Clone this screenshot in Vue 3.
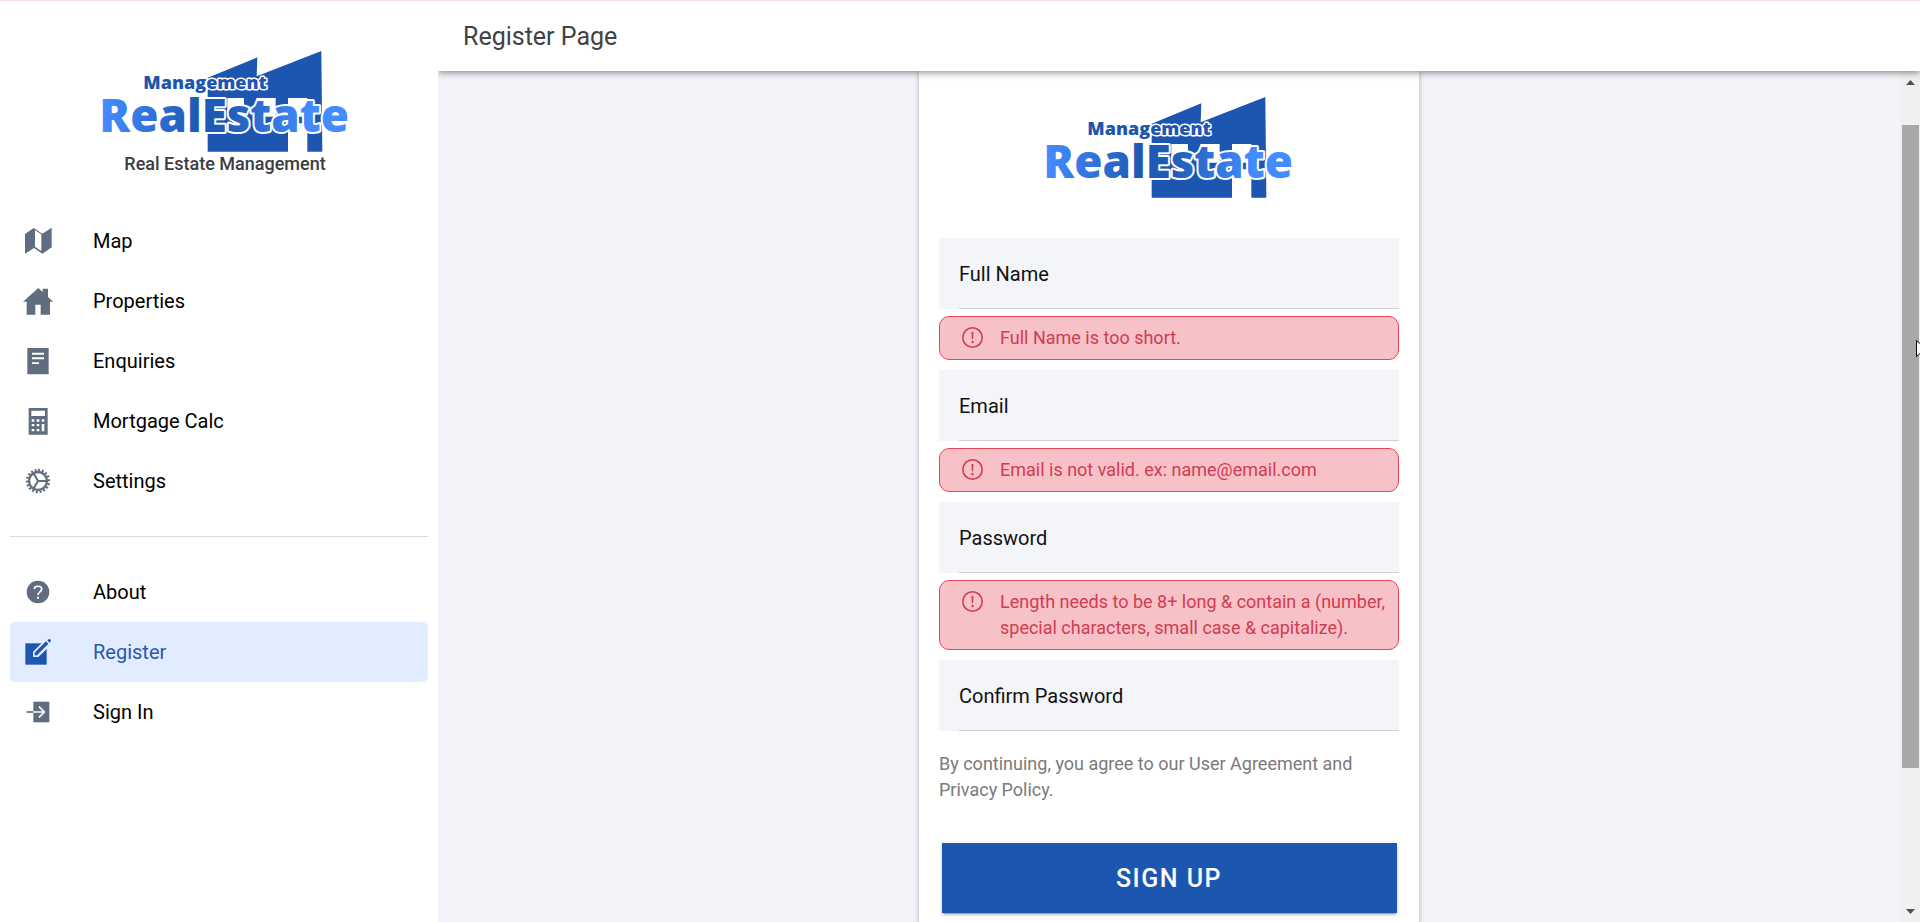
<script setup>
import { reactive, h } from 'vue'

const mainLinks = [
  { label: 'Map', icon: 'map' },
  { label: 'Properties', icon: 'home' },
  { label: 'Enquiries', icon: 'reader' },
  { label: 'Mortgage Calc', icon: 'calculator' },
  { label: 'Settings', icon: 'cog' },
]
const userLinks = [
  { label: 'About', icon: 'help' },
  { label: 'Register', icon: 'create', active: true },
  { label: 'Sign In', icon: 'enter' },
]
const groups = [mainLinks, userLinks]

const icons = {
  map: [{ d: 'M6 24L32 6L58 23L86 5V64L58 83L33 66L6 83ZM36 13V62L55 75V25Z' }],
  home: [{ d: 'M46 6L59 18V8H75V33L90 47H81V86H53V56H37V86H11V47H0Z' }],
  reader: [{ d: 'M13 6H77V85H13ZM27 20V26H63V20ZM27 34V40H63V34ZM27 49V54H48V49Z' }],
  calculator: [
    {
      d: 'M17 6H74V86H17ZM25 14V30H66V14ZM26 40V47H34V40ZM41 40V47H49V40ZM56 40V47H64V40ZM26 54V61H34V54ZM41 54V61H49V54ZM26 69V76H34V69ZM41 69V76H49V69ZM56 54V76H64V54Z',
    },
  ],
  cog: [
    { d: 'M45 18A27 27 0 1 1 45 72A27 27 0 1 1 45 18', line: 7 },
    { d: 'M45 12A33 33 0 1 1 45 78A33 33 0 1 1 45 12', line: 7, dash: '6 5.52' },
    { d: 'M45 45H72M45 45L31 21M45 45L31 69', line: 6 },
  ],
  help: [
    { d: 'M45 11A34 34 0 1 1 45 79A34 34 0 1 1 45 11Z' },
    { d: 'M34 36C35 25 56 25 56 37C56 45 45 44 45 54', line: 5, light: true },
    { d: 'M42 59H48V65H42Z', light: true },
  ],
  create: [
    { d: 'M7 19H71V83H7Z' },
    { d: 'M30 60V44L66 8L84 24L46 60Z', light: true },
    { d: 'M35 55V47L69 13L76 20L42 55Z' },
    { d: 'M73 10L77 7Q80 5 83 8Q85 11 83 13L79 17Z' },
  ],
  enter: [
    { d: 'M31 14H79V76H31Z' },
    { d: 'M11 45H31', line: 5 },
    { d: 'M31 45H64M48 29L64 45L48 61', line: 5, light: true },
  ],
}

const Glyph = (props) =>
  h(
    'svg',
    { viewBox: '0 0 90 90', width: 30, height: 30, 'aria-hidden': 'true' },
    icons[props.name].map((p) => {
      const paint = p.light ? props.ground : 'currentColor'
      return h('path', {
        d: p.d,
        fill: p.line ? 'none' : paint,
        'fill-rule': 'evenodd',
        stroke: p.line ? paint : 'none',
        'stroke-width': p.line,
        'stroke-dasharray': p.dash,
      })
    }),
  )
Glyph.props = ['name', 'ground']

const Logo = (props) =>
  h('svg', { viewBox: '398 108 762 309', width: 254, height: 103, role: 'img', 'aria-label': 'Real Estate Management logo' }, [
    h('defs', [
      h('linearGradient', { id: props.gradient, gradientUnits: 'userSpaceOnUse', x1: 412, x2: 1145, y1: 0, y2: 0 }, [
        h('stop', { offset: '0', 'stop-color': '#438cff' }),
        h('stop', { offset: '0.38', 'stop-color': '#1f5ab5' }),
        h('stop', { offset: '0.5', 'stop-color': '#1f5ab5' }),
        h('stop', { offset: '0.85', 'stop-color': '#438cff' }),
      ]),
    ]),
    h('path', {
      fill: '#1d56b0',
      'fill-rule': 'evenodd',
      d: 'M727 191L876 130L874 187L1068 111L1071 413H1026V328H968V413H727ZM786 252V308H836V252ZM873 252V308H931V252ZM968 252V308H1026V252Z',
    }),
    h('text', { x: 534, y: 225, class: 'logo-small' }, 'Management'),
    h('text', { x: 402, y: 353, class: 'logo-big', fill: `url(#${props.gradient})` }, 'RealEstate'),
  ])
Logo.props = ['gradient']

const fields = [
  { id: 'name', label: 'Full Name', type: 'text', error: 'Full Name is too short.' },
  { id: 'email', label: 'Email', type: 'email', error: 'Email is not valid. ex: name@email.com' },
  {
    id: 'password',
    label: 'Password',
    type: 'password',
    error: 'Length needs to be 8+ long & contain a (number, special characters, small case & capitalize).',
  },
  { id: 'confirm', label: 'Confirm Password', type: 'password' },
]
const form = reactive({ name: '', email: '', password: '', confirm: '' })
</script>

<template>
  <div class="app">
    <aside class="sidebar">
      <div class="brand">
        <Logo gradient="brand-blue" />
        <strong>Real Estate Management</strong>
      </div>
      <nav>
        <ul v-for="(group, i) in groups" :key="i">
          <li v-for="link in group" :key="link.label">
            <a href="#" :class="{ active: link.active }" :aria-current="link.active ? 'page' : null">
              <Glyph :name="link.icon" :ground="link.active ? '#e2ecff' : '#ffffff'" />
              <span>{{ link.label }}</span>
            </a>
          </li>
        </ul>
      </nav>
    </aside>

    <div class="page">
      <header class="toolbar"><h1>Register Page</h1></header>
      <div class="body">
        <main>
          <form class="card" novalidate @submit.prevent>
            <Logo gradient="card-blue" />
            <div v-for="field in fields" :key="field.id" class="entry">
              <label class="field" :for="field.id">
                <span>{{ field.label }}</span>
                <input :id="field.id" v-model="form[field.id]" :type="field.type" />
              </label>
              <p v-if="field.error" class="error" role="alert">
                <svg viewBox="0 0 25 25" width="25" height="25" aria-hidden="true">
                  <circle cx="12.5" cy="12.5" r="9.7" fill="none" stroke="currentColor" stroke-width="1.6" />
                  <path d="M11.5 7h2l-.4 7.2h-1.200z" fill="currentColor" />
                  <circle cx="12.5" cy="17" r="1.2" fill="currentColor" />
                </svg>
                <span>{{ field.error }}</span>
              </p>
            </div>
            <p class="terms">By continuing, you agree to our User Agreement and Privacy Policy.</p>
            <button type="submit">SIGN UP</button>
          </form>
        </main>
        <div class="scrollbar" aria-hidden="true">
          <svg viewBox="0 0 9 5" width="9" height="5"><path d="M0 5L4.500 0L9 5Z" fill="#505050" /></svg>
          <div class="track"><div class="thumb"></div></div>
          <svg viewBox="0 0 9 5" width="9" height="5"><path d="M0 0L4.500 5L9 0Z" fill="#505050" /></svg>
        </div>
      </div>
    </div>
    <svg class="pointer" viewBox="0 0 4 17" width="4" height="17" aria-hidden="true">
      <path d="M0.500 0.500V16.500L4 13.500V3.500Z" fill="#fff" />
      <path d="M4 3.500L0.500 0.500V16.500L4 13.500" fill="none" stroke="#0b0b1c" />
    </svg>
  </div>
</template>

<style>
body {
  overflow: hidden;
}
.logo-small,
.logo-big {
  font-family: 'Open Sans', 'Noto Sans', sans-serif;
  font-weight: 800;
  stroke: #fff;
  stroke-linejoin: round;
  paint-order: stroke;
}
.logo-small {
  font-size: 54px;
  fill: #1d56b0;
  stroke-width: 9px;
}
.logo-big {
  font-size: 137px;
  stroke-width: 12px;
}
</style>

<style scoped>
.app {
  position: relative;
  display: flex;
  height: 100vh;
  box-sizing: border-box;
  border-top: 1px solid #f2dde8;
  overflow: hidden;
  background: #fff;
  font-family: Roboto, 'Liberation Sans', sans-serif;
  font-size: 20px;
  color: #000;
}
.sidebar {
  flex: 0 0 438px;
  position: relative;
  z-index: 2;
  background: #fff;
}
.brand {
  display: flex;
  flex-direction: column;
  align-items: center;
  padding: 49px 0 36px 12px;
}
.brand strong {
  font-size: 18px;
  line-height: 22px;
  font-weight: 500;
  color: #3c3c40;
}
.brand svg,
.card > svg {
  display: block;
  overflow: visible;
}
ul {
  list-style: none;
  margin: 0 10px;
  padding: 0 0 25px;
}
ul + ul {
  padding-top: 25px;
  border-top: 1px solid #d8d9db;
}
nav a {
  display: flex;
  align-items: center;
  gap: 40px;
  height: 60px;
  padding: 0 13px;
  border-radius: 5px;
  color: #000;
  text-decoration: none;
}
nav a svg {
  color: #5f6d7e;
}
nav a.active {
  background: #e2ecff;
  color: #2b57b0;
}
nav a.active svg {
  color: #1d56b0;
}
.page {
  flex: 1;
  min-width: 0;
  display: flex;
  flex-direction: column;
}
.toolbar {
  position: relative;
  z-index: 1;
  flex: 0 0 70px;
  display: flex;
  align-items: center;
  padding: 0 25px;
  background: #fff;
  box-shadow: 0 2px 4px -1px rgba(0, 0, 0, 0.2), 0 4px 5px 0 rgba(0, 0, 0, 0.14), 0 1px 10px 0 rgba(0, 0, 0, 0.12);
}
h1 {
  margin: 0;
  font-size: 25px;
  font-weight: 400;
  color: #424242;
}
.body {
  flex: 1;
  min-height: 0;
  display: flex;
  background: #f2f4f9;
}
main {
  flex: 1;
  min-width: 0;
  overflow: hidden;
}
.card {
  box-sizing: border-box;
  max-width: 500px;
  margin: 0 auto;
  padding: 25px 20px 60px;
  background: #fff;
  box-shadow: 0 1px 5px rgba(0, 0, 0, 0.3);
}
.card > svg {
  margin: 0 auto 39px;
}
.field {
  display: flex;
  align-items: center;
  gap: 20px;
  height: 71px;
  padding-left: 20px;
  background: linear-gradient(#d0d2d7, #d0d2d7) 20px 100% / 100% 1px no-repeat #f4f5f9;
  color: #111;
}
.field input {
  flex: 1;
  min-width: 0;
  border: 0;
  outline: 0;
  background: transparent;
  font: inherit;
}
.error {
  display: flex;
  align-items: flex-start;
  gap: 15px;
  margin: 7px 0 10px;
  padding: 8px 5px 8px 20px;
  border: 1px solid #eb445a;
  border-radius: 10px;
  background: #f7c1c8;
  color: #d13c50;
  font-size: 18px;
  line-height: 26px;
}
.error svg {
  flex: none;
}
.terms {
  margin: 20px 0 40px;
  font-size: 18px;
  line-height: 26px;
  color: #7a7a7a;
}
button {
  display: block;
  width: calc(100% - 5px);
  height: 70px;
  margin: 0 auto;
  border: 0;
  background: #1d56b0;
  color: #fff;
  font: 500 25px Roboto, 'Liberation Sans', sans-serif;
  letter-spacing: 0.06em;
  box-shadow: 0 3px 1px -2px rgba(0, 0, 0, 0.2), 0 2px 2px 0 rgba(0, 0, 0, 0.14), 0 1px 5px 0 rgba(0, 0, 0, 0.12);
}
.scrollbar {
  flex: 0 0 20px;
  display: flex;
  flex-direction: column;
  align-items: center;
  gap: 9px;
  box-sizing: border-box;
  padding: 9px 0 8px;
  background: #f0f0f0;
}
.track {
  flex: 1;
  width: 17px;
  padding-top: 31px;
}
.thumb {
  height: 83%;
  background: #a8a8a8;
}
.pointer {
  position: absolute;
  z-index: 3;
  right: 0;
  top: 339px;
}
</style>
